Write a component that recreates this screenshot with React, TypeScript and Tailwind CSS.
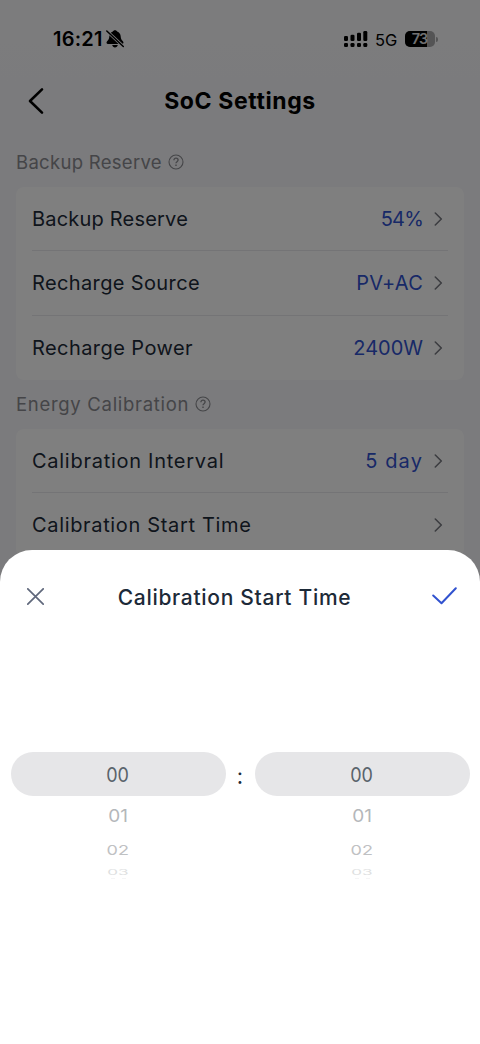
import type { ReactNode } from 'react';
import clsx from 'clsx';

type RowData = {
  label: string;
  value?: string;
  labelClass: string;
  valueClass?: string;
};

const backupRows: RowData[] = [
  { label: 'Backup Reserve', value: '54%', labelClass: 'tracking-[0.2px]', valueClass: 'tracking-[-0.8px]' },
  { label: 'Recharge Source', value: 'PV+AC', labelClass: 'tracking-[0.37px]', valueClass: 'tracking-[0.2px]' },
  { label: 'Recharge Power', value: '2400W', labelClass: 'tracking-[0.43px]', valueClass: 'tracking-[0px]' },
];

const calibrationRows: RowData[] = [
  { label: 'Calibration Interval', value: '5 day', labelClass: 'tracking-[0.73px]', valueClass: 'tracking-[1.1px]' },
  { label: 'Calibration Start Time', labelClass: 'tracking-[0.66px]' },
];

function StatusBar() {
  return (
    <div className="flex h-[78px] items-center justify-between pl-[53px] pr-[42px] text-black">
      <div className="flex items-center gap-[3px]">
        <span className="text-[20px] font-semibold leading-[26px] tracking-[0.2px]">16:21</span>
        <svg width="18" height="18" viewBox="0 0 18 18">
          <path
            d="M9 .2c1.100 0 1.900.6 2.100 1.400 2.200.8 3.500 2.700 3.600 5 .1 2.200.8 3.300 2.200 4.700 1.100 1.100.6 2.700-.9 2.700H2c-1.500 0-2-1.600-.9-2.700 1.400-1.400 2.100-2.500 2.200-4.700.1-2.300 1.400-4.200 3.600-5C7.100.8 7.900.2 9 .2zM6.200 14.900h5.600c-.3 1.600-1.400 2.500-2.800 2.500s-2.500-.9-2.800-2.500z"
            fill="currentColor"
          />
          <path d="M.8 1L17.300 16.500" stroke="#f8f8fa" strokeWidth="3" />
          <path d="M.8 1L17.300 16.500" stroke="currentColor" strokeWidth="1.500" strokeLinecap="round" />
        </svg>
      </div>
      <div className="flex items-center">
        <svg width="24" height="18" viewBox="0 0 24 18" fill="currentColor">
          <rect x="0" y="6" width="4" height="5" rx="1.300" />
          <rect x="6.500" y="4.700" width="4" height="6.300" rx="1.300" />
          <rect x="13" y="2.700" width="4" height="8.300" rx="1.300" />
          <rect x="19.300" y="1" width="4" height="10" rx="1.300" />
          <rect x="0" y="13" width="4" height="4" rx="1.300" />
          <rect x="6.500" y="13" width="4" height="4" rx="1.300" />
          <rect x="13" y="13" width="4" height="4" rx="1.300" />
          <rect x="19.300" y="13" width="4" height="4" rx="1.300" />
        </svg>
        <span className="ml-[7px] w-[22px] pt-px text-[16.500px] leading-[26px]">5G</span>
        <div className="relative ml-[8px] flex h-4 w-[30px] items-center overflow-hidden rounded-[5px] bg-[#a8a8aa]">
          <div className="h-full w-[22px] bg-black" />
          <span className="absolute inset-0 pr-px text-center text-[14.500px] font-semibold leading-4 tracking-[-0.8px] text-[#e2e2e4]">
            73
          </span>
        </div>
        <div className="ml-px h-[5px] w-[2px] rounded-r-full bg-[#a8a8aa]" />
      </div>
    </div>
  );
}

function HelpIcon() {
  return (
    <svg width="16" height="16" viewBox="0 0 16 16" fill="none" stroke="currentColor" strokeWidth="1.100">
      <circle cx="8" cy="8" r="7" />
      <path d="M5.900 6.300c0-1.300.9-2.100 2.100-2.100s2.100.8 2.100 1.900c0 1.600-2.100 1.600-2.100 3.200" strokeWidth="1.300" />
      <path d="M8 10.500v1.400" strokeWidth="1.400" />
    </svg>
  );
}

function SectionLabel({ children, className }: { children: ReactNode; className?: string }) {
  return (
    <div className={clsx('flex h-6 items-center gap-[6px] pl-4 text-[#8a8b90]', className)}>
      <span className="text-[18.500px] leading-6">{children}</span>
      <HelpIcon />
    </div>
  );
}

function SettingsCard({ rows }: { rows: RowData[] }) {
  return (
    <div className="mx-4 rounded-lg bg-white px-4">
      {rows.map((row, index) => (
        <div
          key={row.label}
          className={clsx(
            'flex h-[64.300px] items-center justify-between pr-[5px]',
            index > 0 && 'shadow-[0_-1px_0_#e8e9ec]'
          )}
        >
          <span className={clsx('text-[20px] leading-7 text-[#1d2a38]', row.labelClass)}>{row.label}</span>
          <div className="flex items-center gap-[11px]">
            {row.value && (
              <span className={clsx('text-[20px] leading-7 text-[#3152cf]', row.valueClass)}>{row.value}</span>
            )}
            <svg width="9" height="14" viewBox="0 0 9 14" fill="none" stroke="#797b82" strokeWidth="1.600">
              <path d="M1.300 1l6 6-6 6" strokeLinecap="round" strokeLinejoin="round" />
            </svg>
          </div>
        </div>
      ))}
    </div>
  );
}

function WheelColumn() {
  return (
    <div className="flex w-[215px] flex-col items-center">
      <div className="flex h-11 w-full items-center justify-center rounded-[22px] bg-[#e6e6e8] text-[20px] text-[#59636b]">
        <span className="mt-px scale-x-90">00</span>
      </div>
      <div className="flex h-[41px] items-center text-[19px] text-[#b4b7ba]">
        <span className="scale-y-[0.93]">01</span>
      </div>
      <div className="flex h-7 items-center text-[19px] text-[#bfc1c3]">
        <span className="scale-y-[0.72] scale-x-95">02</span>
      </div>
      <div className="flex h-4 items-center text-[19px] text-[#dedfe1]">
        <span className="scale-y-[0.38] scale-x-90">03</span>
      </div>
      {/* Top sliver of the next value before it rolls out of sight */}
      <div className="-mt-[3px] flex h-[2px] gap-[7px]">
        <span className="h-px w-1 bg-[#f5f5f6]" />
        <span className="h-px w-1 bg-[#f5f5f6]" />
      </div>
    </div>
  );
}

function TimeSheet() {
  return (
    <section className="absolute inset-x-0 bottom-0 h-[494px] rounded-t-[32px] bg-white">
      <div className="flex h-[94px] items-center justify-between pl-[27px] pr-[23px]">
        <svg width="17" height="17" viewBox="0 0 17 17" fill="none" stroke="#60687c" strokeWidth="1.700" className="-mt-[2px]">
          <path d="M.8.8l15.400 15.400M16.200.8L.8 16.200" strokeLinecap="round" />
        </svg>
        <h2 className="mr-[7px] mt-[2px] text-[21px] font-medium tracking-[0.7px] text-[#1d2a38]">
          Calibration Start Time
        </h2>
        <svg width="25" height="18" viewBox="0 0 25 18" fill="none" stroke="#3152cf" strokeWidth="2" className="-mt-[2px]">
          <path d="M1.200 8.500l8.300 7.700L23.800 1.200" strokeLinecap="round" strokeLinejoin="round" />
        </svg>
      </div>
      <div className="mt-[108px] flex justify-between px-[10.500px]">
        <WheelColumn />
        <div className="flex h-11 items-center justify-center pt-[3px]">
          <span className="text-[22px] leading-none text-[#1d2a38]">:</span>
        </div>
        <WheelColumn />
      </div>
    </section>
  );
}

export default function App() {
  return (
    <div className="relative h-[1044px] w-[480px] overflow-hidden bg-[#f6f6fa] font-['Inter',sans-serif]">
      <div className="bg-linear-to-b from-[#f9f9fb] to-[#f6f6fa]">
        <StatusBar />
        <header className="relative flex h-[46px] items-center justify-center">
          <svg
            width="18"
            height="28"
            viewBox="0 0 18 28"
            fill="none"
            stroke="black"
            strokeWidth="2.600"
            className="absolute left-[27px] top-[8.500px]"
          >
            <path d="M15 2.400L3 14l12 11.600" strokeLinecap="round" strokeLinejoin="round" />
          </svg>
          <h1 className="text-[23px] font-bold tracking-[0.6px] text-black">SoC Settings</h1>
        </header>
      </div>

      <SectionLabel className="mt-[26px] tracking-[0.3px]">Backup Reserve</SectionLabel>
      <div className="mt-[13px]">
        <SettingsCard rows={backupRows} />
      </div>

      <SectionLabel className="mt-[12px] tracking-[0.7px]">Energy Calibration</SectionLabel>
      <div className="mt-[13px]">
        <SettingsCard rows={calibrationRows} />
      </div>

      {/* Backdrop */}
      <div className="absolute inset-0 bg-black/50" />

      <TimeSheet />
    </div>
  );
}
